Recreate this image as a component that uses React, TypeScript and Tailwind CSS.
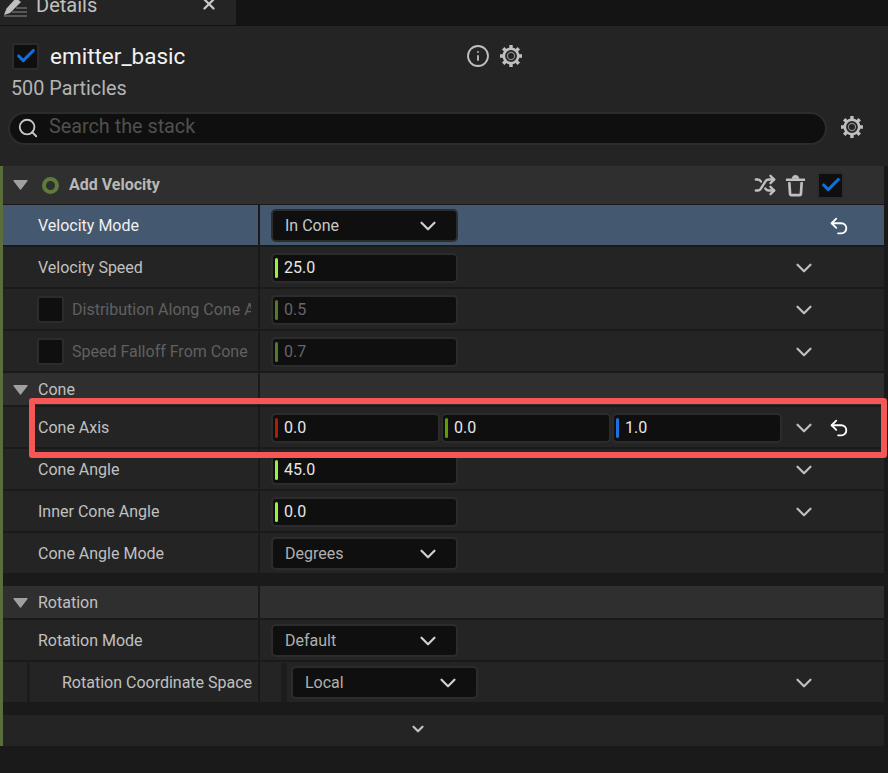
import React from 'react';
import { ChevronDown, Search, Shuffle, Undo2, X, Check, Info } from 'lucide-react';

const Gear: React.FC<{ className?: string }> = ({ className }) => (
  <svg viewBox="0 0 24 24" className={className} fill="none">
    <circle cx="12" cy="12" r="7.2" stroke="#c0c0c0" strokeWidth="2.6" />
    <circle cx="12" cy="12" r="3.6" stroke="#8a8a8a" strokeWidth="1.2" />
    <g stroke="#c0c0c0" strokeWidth="3.4">
      <path d="M12 1v3.5M12 19.5V23M1 12h3.5M19.5 12H23M4.2 4.2l2.5 2.5M17.3 17.3l2.5 2.5M4.2 19.8l2.5-2.5M17.3 6.7l2.5-2.5" />
    </g>
  </svg>
);

const Trash = () => (
  <svg viewBox="0 0 22 24" className="w-[21px] h-[23px]" fill="none" stroke="#c0c0c0">
    <path d="M1 6h20" strokeWidth="2.6" />
    <path d="M7.5 5c.3-2.6 1.5-3.6 3.5-3.6s3.2 1 3.5 3.6" fill="#c0c0c0" strokeWidth="1" />
    <path d="M4.5 8.500l.8 12q.1 1.500 1.500 1.500h8.400q1.400 0 1.500-1.500l.8-12" strokeWidth="2.8" />
  </svg>
);

const DetailsIcon = () => (
  <svg viewBox="0 0 24 18" className="w-[24px] h-[18px]" fill="none">
    <path d="M1 16l2.500-6.500L13-1l5 4L7 14z" fill="#c0c0c0" />
    <path d="M13 9h11M9 13h15M1 17h23" stroke="#8a8a8a" strokeWidth="1.2" />
  </svg>
);

const Triangle = () => (
  <svg viewBox="0 0 15 10" className="w-[15px] h-[10px]">
    <path d="M1 0h13q1 0 .5 1L8 9.500q-.5.500-1 0L.5 1Q0 0 1 0z" fill="#a0a0a0" />
  </svg>
);

const CheckBox: React.FC<{ checked?: boolean }> = ({ checked }) => (
  <div className="w-[27px] h-[27px] shrink-0 flex items-center justify-center rounded-[3px] bg-[#0f0f0f] border-2 border-[#2c2c2c]">
    {checked && <Check className="w-[22px] h-[22px] text-[#0e70e0]" strokeWidth={3.4} />}
  </div>
);

const Caret: React.FC<{ tone?: string }> = ({ tone = 'text-[#c0c0c0]' }) => (
  <ChevronDown className={`w-[26px] h-[26px] shrink-0 ${tone}`} strokeWidth={2} />
);

const NumField: React.FC<{ value: string; bar: string; w?: string; dim?: boolean }> = ({ value, bar, w = 'w-[187px]', dim }) => (
  <div className={`${w} h-[30px] flex items-center shrink-0 rounded-[5px] bg-[#0f0f0f] border-2 border-[#2c2c2c]`}>
    <div className={`w-[3px] h-[20px] ml-[2px] rounded-[2px] ${bar}`} />
    <span className={`ml-[6px] ${dim ? 'text-[#666666]' : 'text-[#e6e6e6]'}`}>{value}</span>
  </div>
);

const Combo: React.FC<{ value: string; bright?: boolean }> = ({ value, bright }) => (
  <div className="w-[187px] h-[33px] flex items-center justify-between shrink-0 pl-[12px] pr-[15px] rounded-[5px] bg-[#0f0f0f] border-2 border-[#2c2c2c]">
    <span className={bright ? 'text-[#c8c8c8]' : 'text-[#b0b0b0]'}>{value}</span>
    <Caret tone="text-[#d0d0d0]" />
  </div>
);

interface RowProps {
  label?: React.ReactNode;
  children?: React.ReactNode;
  more?: boolean;
  reset?: boolean;
  selected?: boolean;
}

// one property row: name column, divider, value column, chevron + reset on the right
const Row: React.FC<RowProps> = ({ label, children, more, reset, selected }) => (
  <div className={`flex h-[40px] mb-[2px] pt-[1px] ${selected ? 'bg-[#44586f]' : 'bg-[#242424]'}`}>
    <div className={`w-[255px] flex items-center pl-[35px] ${selected ? 'text-[#f0f0f0]' : 'text-[#c0c0c0]'}`}>{label}</div>
    <div className="w-[2px] -mt-[1px] h-[40px] bg-[#1a1a1a]" />
    <div className="flex-1 flex items-center pl-[11px] min-w-0">{children}</div>
    <div className="w-[32px] flex items-center justify-center pl-[2px]">{more && <Caret />}</div>
    <div className="w-[65px] flex items-center pl-[9px]">
      {reset && <Undo2 className="w-[22px] h-[22px] text-white" strokeWidth={2} />}
    </div>
  </div>
);

const Section: React.FC<{ title: string }> = ({ title }) => (
  <div className="flex h-[32px] mb-[2px] pt-[1px] bg-[#2f2f2f]">
    <div className="w-[255px] flex items-center pl-[35px] relative text-[#c0c0c0]">
      <div className="absolute left-[10px] top-[11px]">
        <Triangle />
      </div>
      {title}
    </div>
    <div className="w-[2px] -mt-[1px] h-[32px] bg-[#1a1a1a]" />
  </div>
);

const LABEL_DIM = 'text-[#606060]';

export default function App() {
  return (
    <div className="w-[888px] h-[773px] overflow-hidden bg-[#1a1a1a] text-[16px] font-['Roboto',sans-serif] relative">
      {/* tab strip */}
      <div className="h-[26px] flex bg-[#141414] border-b border-[#111111]">
        <div className="w-[236px] flex items-center bg-[#242424] pl-[3px] overflow-hidden">
          <div className="-mt-[9px]">
            <DetailsIcon />
          </div>
          <span className="ml-[9px] -mt-[16px] text-[#c0c0c0] text-[20px] leading-[24px]">Details</span>
          <X className="ml-[103px] -mt-[17px] w-[18px] h-[18px] text-[#c8c8c8]" strokeWidth={3} />
        </div>
      </div>

      {/* emitter header */}
      <div className="h-[140px] bg-[#242424] pt-[16px] pl-[12px] pr-[24px]">
        <div className="flex items-center h-[28px]">
          <CheckBox checked />
          <span className="ml-[11px] pt-[1px] text-[22.5px] text-[#f2f2f2] w-[416px]">emitter_basic</span>
          <Info className="w-[24px] h-[24px] text-[#c0c0c0]" strokeWidth={1.8} />
          <Gear className="ml-[9px] w-[24px] h-[24px]" />
        </div>
        <div className="mt-[7px] -ml-[1px] text-[19.8px] leading-[24px] text-[#b4b4b4]">500 Particles</div>
        <div className="flex items-center mt-[11px] -ml-[4px]">
          <div className="w-[822px] h-[33px] flex items-center rounded-full bg-[#0f0f0f] border-2 border-[#2c2c2c] pl-[7px]">
            <Search className="-mt-[1px] w-[22px] h-[22px] text-[#c8c8c8]" strokeWidth={2} />
            <span className="ml-[10px] -mt-[4px] text-[19.8px] text-[#505050]">Search the stack</span>
          </div>
          <Gear className="ml-[13px] -mt-[4px] w-[24px] h-[24px]" />
        </div>
      </div>

      {/* stack */}
      <div className="w-[884px] bg-[#1a1a1a] border-l-[3px] border-[#5a6e3c]">
        <div className="h-[38px] mb-[1px] flex items-center bg-[#2f2f2f] relative">
          <div className="ml-[10px]">
            <Triangle />
          </div>
          <div className="ml-[14px] w-[17px] h-[17px] rounded-full border-[4px] border-[#5f7a3a]" />
          <span className="ml-[10px] font-bold text-[#b8b8b8]">Add Velocity</span>
          <div className="ml-auto mr-[40px] flex items-center">
            <Shuffle className="w-[22px] h-[22px] text-[#c0c0c0]" strokeWidth={2.6} />
            <div className="ml-[9px]">
              <Trash />
            </div>
            <div className="ml-[11px]">
              <CheckBox checked />
            </div>
          </div>
        </div>

        <Row selected reset label="Velocity Mode">
          <Combo value="In Cone" bright />
        </Row>
        <Row more label="Velocity Speed">
          <NumField value="25.0" bar="bg-[#9bf03c]" />
        </Row>
        <Row
          more
          label={
            <div className={`flex items-center gap-[8px] -ml-[1px] w-[214px] overflow-hidden whitespace-nowrap ${LABEL_DIM}`}>
              <CheckBox />
              Distribution Along Cone Axis
            </div>
          }
        >
          <NumField value="0.5" bar="bg-[#527a2a]" dim />
        </Row>
        <Row
          more
          label={
            <div className={`flex items-center gap-[8px] -ml-[1px] w-[214px] overflow-hidden whitespace-nowrap ${LABEL_DIM}`}>
              <CheckBox />
              Speed Falloff From Cone
            </div>
          }
        >
          <NumField value="0.7" bar="bg-[#527a2a]" dim />
        </Row>

        <Section title="Cone" />
        <Row more reset label="Cone Axis">
          <div className="flex gap-[1px]">
            <NumField value="0.0" bar="bg-[#b01e00]" w="w-[169px]" />
            <NumField value="0.0" bar="bg-[#5ca000]" w="w-[170px]" />
            <NumField value="1.0" bar="bg-[#2070e0]" w="w-[170px]" />
          </div>
        </Row>
        <Row more label="Cone Angle">
          <NumField value="45.0" bar="bg-[#9bf03c]" />
        </Row>
        <Row more label="Inner Cone Angle">
          <NumField value="0.0" bar="bg-[#9bf03c]" />
        </Row>
        <Row label="Cone Angle Mode">
          <Combo value="Degrees" />
        </Row>

        <div className="h-[11px]" />
        <Section title="Rotation" />
        <Row label="Rotation Mode">
          <Combo value="Default" />
        </Row>
        <Row
          more
          label={
            <div className="-ml-[11px] whitespace-nowrap flex items-center h-[39px]">
              <div className="w-[3px] h-[39px] mr-[32px] bg-[#1c1c1c]" />
              Rotation Coordinate Space
            </div>
          }
        >
          <div className="w-[6px] h-[39px] ml-[10px] mr-[4px] bg-[#1c1c1c]" />
          <Combo value="Local" />
        </Row>
        <div className="h-[10px]" />
        <div className="h-[31px] mt-[1px] flex bg-[#242424]">
          <ChevronDown className="ml-[406px] mt-[5px] w-[18px] h-[18px] text-[#c0c0c0]" strokeWidth={3} />
        </div>
      </div>

      {/* callout drawn over the screenshot */}
      <div className="absolute left-[29px] top-[398px] w-[858px] h-[60px] rounded-[3px] border-[6px] border-[#f55656]" />
    </div>
  );
}
